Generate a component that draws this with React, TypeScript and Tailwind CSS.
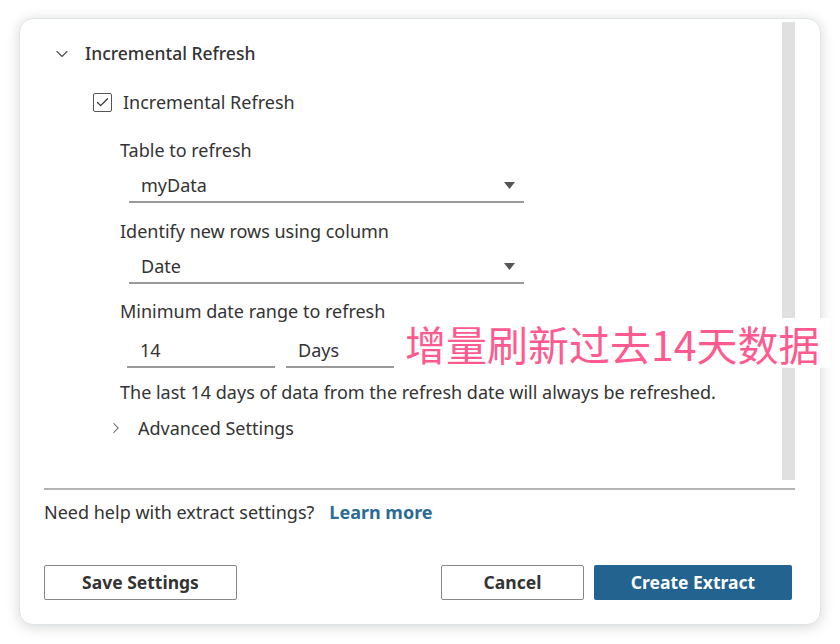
import { ChevronDown, ChevronRight, Check } from 'lucide-react';

const font = { fontFamily: '"Noto Sans", "Noto Sans CJK SC", sans-serif' };

const Caret = () => (
  <svg width="11" height="7" viewBox="0 0 11 7" className="shrink-0">
    <path d="M0 0 L11 0 L5.5 7 Z" fill="#555" />
  </svg>
);

const App = () => {
  return (
    <div className="w-[840px] h-[644px] bg-white pt-[18px] pl-[19px] overflow-hidden" style={font}>
      {/* Dialog card */}
      <div className="relative w-[802px] h-[607px] bg-white rounded-[14px] border border-[#dde5e8] shadow-[0_2px_14px_rgba(0,0,0,0.16)] flex flex-col text-[#333]">
        {/* Scroll area */}
        <div className="flex h-[458px] mt-[3px]">
          <div className="flex-1 flex flex-col">
            {/* Section header */}
            <div className="flex items-center h-[24px] mt-[20px] pl-[32px]">
              <ChevronDown className="w-[20px] h-[20px] text-[#555]" strokeWidth={1.4} />
              <span className="ml-[13px] text-[17.5px] font-medium leading-none">Incremental Refresh</span>
            </div>

            {/* Checkbox */}
            <div className="flex items-center h-[24px] mt-[24px] pl-[73px]">
              <div className="w-[19px] h-[19px] border-[1.5px] border-[#555] rounded-[2px] flex items-center justify-center">
                <Check className="w-[15px] h-[15px] text-[#333]" strokeWidth={2} />
              </div>
              <span className="ml-[11px] text-[18px] leading-none">Incremental Refresh</span>
            </div>

            <div className="pl-[100px] flex flex-col text-[18px]">
              {/* Table to refresh */}
              <div className="h-[22px] mt-[25px] flex items-center">Table to refresh</div>
              <div className="ml-[9px] mt-[8px] w-[395px] h-[34px] border-b-2 border-[#999] flex items-center justify-between pl-[12px] pr-[9px]">
                <span>myData</span>
                <Caret />
              </div>

              {/* Identify new rows */}
              <div className="h-[22px] mt-[17px] flex items-center">Identify new rows using column</div>
              <div className="ml-[9px] mt-[8px] w-[395px] h-[34px] border-b-2 border-[#999] flex items-center justify-between pl-[12px] pr-[9px]">
                <span>Date</span>
                <Caret />
              </div>

              {/* Minimum date range */}
              <div className="h-[22px] mt-[16px] flex items-center">Minimum date range to refresh</div>
              <div className="flex ml-[7px] mt-[12px] gap-[11px]">
                <div className="w-[148px] h-[34px] border-b-2 border-[#999] flex items-center pl-[13px]">14</div>
                <div className="w-[239px] h-[34px] border-b-2 border-[#999] flex items-center pl-[12px]">Days</div>
              </div>

              <div className="h-[22px] mt-[13px] flex items-center whitespace-nowrap">
                The last 14 days of data from the refresh date will always be refreshed.
              </div>
            </div>

            {/* Advanced settings */}
            <div className="flex items-center h-[22px] mt-[14px] pl-[87px]">
              <ChevronRight className="w-[18px] h-[18px] text-[#555]" strokeWidth={1.4} />
              <span className="ml-[13px] text-[18px] leading-none">Advanced Settings</span>
            </div>
          </div>

          {/* Scrollbar */}
          <div className="w-[13px] h-full bg-[#e0e0e0] mr-[25px]" />
        </div>

        {/* Divider */}
        <div className="ml-[24px] mr-[25px] mt-[8px] h-[2px] bg-[#b4b4b4]" />

        {/* Help */}
        <div className="flex items-center h-[24px] mt-[10px] pl-[24px] text-[18px]">
          <span>Need help with extract settings?</span>
          <span className="ml-[15px] font-bold text-[#2b6c96]">Learn more</span>
        </div>

        {/* Buttons */}
        <div className="flex items-center mt-[41px] pl-[24px] pr-[28px]">
          <button className="w-[193px] h-[35px] border-[1.5px] border-[#888] rounded-[2px] text-[17.5px] font-bold text-[#333]">
            Save Settings
          </button>
          <div className="flex-1" />
          <button className="w-[143px] h-[35px] border-[1.5px] border-[#888] rounded-[2px] text-[17.5px] font-bold text-[#333]">
            Cancel
          </button>
          <button className="ml-[10px] w-[198px] h-[35px] bg-[#22638f] rounded-[2px] text-[17.5px] font-bold text-white">
            Create Extract
          </button>
        </div>

        {/* Annotation overlay */}
        <div
          className="absolute left-[374px] top-[299px] w-[436px] h-[50px] bg-white flex items-center pl-[11px] text-[41px] leading-none text-[#ff5a8f]"
          style={{ fontFamily: '"Noto Sans CJK SC", "Noto Sans", sans-serif' }}
        >
          增量刷新过去14天数据
        </div>
      </div>
    </div>
  );
};

export default App;
